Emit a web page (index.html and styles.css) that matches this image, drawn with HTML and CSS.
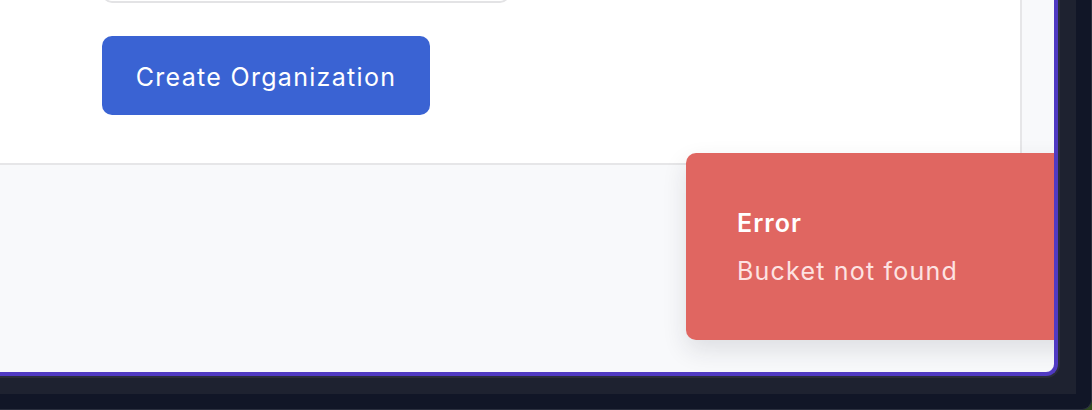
FILE: index.html
```html
<!DOCTYPE html>
<html lang="en">
<head>
<meta charset="utf-8">
<title>Create Organization</title>
<link rel="stylesheet" href="styles.css">
</head>
<body>
<div class="screen">
  <div class="frame">
    <div class="viewport">
      <section class="card">
        <input class="text-input" type="text" aria-label="Organization name">
        <button class="btn-primary" type="button">Create Organization</button>
      </section>
      <div class="toast" role="alert">
        <div class="toast-title">Error</div>
        <div class="toast-body">Bucket not found</div>
      </div>
    </div>
  </div>
</div>
</body>
</html>
```

FILE: styles.css
```css
html, body {
  margin: 0;
  padding: 0;
}
body {
  width: 1092px;
  height: 410px;
  overflow: hidden;
  background: #2e4a1f;
  font-family: Inter, "Noto Sans", sans-serif;
}
.screen {
  width: 1091px;
  height: 409px;
  background: #111627;
  border-right: 1px solid #2a2f3e;
  border-bottom: 1px solid #2a2f3e;
  border-bottom-right-radius: 10px;
  overflow: hidden;
}
.frame {
  width: 1076px;
  height: 394px;
  background: #1e2230;
}
.viewport {
  position: relative;
  width: 1054px;
  height: 372px;
  background: #f8f9fb;
  border-right: 4px solid #503ac2;
  border-bottom: 4px solid #503ac2;
  border-bottom-right-radius: 12px;
  box-shadow: 0 0 0 2px #2b2e3b;
  overflow: hidden;
}
.card {
  width: 918px;
  padding: 0 0 48px 102px;
  background: #ffffff;
  border-right: 2px solid #e6e6e8;
  border-bottom: 2px solid #e6e6e8;
  display: flex;
  flex-direction: column;
  align-items: flex-start;
}
.text-input {
  box-sizing: border-box;
  width: 408px;
  height: 48px;
  margin: -45px 0 0 0;
  border: 2px solid #e3e3e5;
  border-radius: 10px;
  background: #ffffff;
}
.btn-primary {
  margin-top: 33px;
  width: 328px;
  height: 79px;
  border: none;
  border-radius: 10px;
  background: #3a63d3;
  color: #ffffff;
  font-family: Inter, "Noto Sans", sans-serif;
  font-size: 25px;
  letter-spacing: 1.3px;
  font-weight: 400;
  padding: 2px 0 0;
}
.toast {
  position: absolute;
  left: 686px;
  top: 153px;
  width: 420px;
  height: 187px;
  box-sizing: border-box;
  padding: 52px 51px 0;
  background: #e06661;
  border-radius: 10px;
  box-shadow: 0 10px 24px rgba(30, 35, 50, 0.12);
}
.toast-title {
  font-size: 25px;
  line-height: 36px;
  letter-spacing: 1px;
  font-weight: 600;
  color: #ffffff;
}
.toast-body {
  margin-top: 12px;
  font-size: 25px;
  line-height: 36px;
  letter-spacing: 1.2px;
  font-weight: 400;
  color: #fde3e2;
}
```
